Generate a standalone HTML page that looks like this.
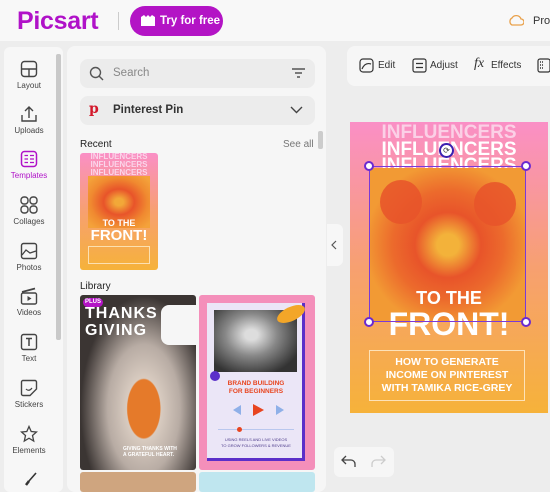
<!DOCTYPE html>
<html><head><style>
*{margin:0;padding:0;box-sizing:border-box}
body{width:550px;height:490px;overflow:hidden;background:#ededed;font-family:"Liberation Sans",sans-serif;position:relative}
.abs{position:absolute}
.top{left:0;top:0;width:550px;height:41px;background:#f8f8f8}
.logo{left:17px;top:7px;font-size:25px;color:#b012c8;font-weight:bold;letter-spacing:-0.3px}
.btn{left:130px;top:6px;width:93px;height:30px;border-radius:15px;background:#b314c5;color:#fff;font-size:11.5px;font-weight:bold;line-height:30px;padding-left:30px;white-space:nowrap}
.side{left:4px;top:47px;width:59px;height:445px;background:#f7f7f7;border-radius:6px}
.sb{left:56px;top:54px;width:5px;height:286px;background:#c9c9c9;border-radius:2px}
.it{left:4px;width:50px;text-align:center;font-size:8px;color:#444}
.it svg{display:block;margin:0 auto 3px}
.panel{left:67px;top:46px;width:259px;height:446px;background:#f6f6f6;border-radius:8px}
.field{left:80px;width:235px;height:29px;background:#ececec;border-radius:8px;font-size:11.5px}
.tb{left:347px;top:46px;width:210px;height:40px;background:#f6f6f6;border-radius:8px;font-size:10px;color:#333}
.poster{background:linear-gradient(#fa8fc6 0%,#f7a070 50%,#f6b23a 100%);overflow:hidden}
.w{color:#fff;font-weight:bold;text-align:center;white-space:nowrap}
</style></head><body>
<div class="abs top"></div>
<div class="abs logo">Picsart</div>
<div class="abs" style="left:118px;top:12px;width:1px;height:18px;background:#ccc"></div>
<div class="abs btn"><svg class="abs" style="left:11px;top:9px" width="14" height="11"><path d="M0 2 L3 0 L5 2 L7 0 L9 2 L11 0 L14 2 V11 H0Z" fill="#fff"/></svg>Try for free</div>
<svg class="abs" style="left:508px;top:14px" width="16" height="12"><path d="M4 11 A4 4 0 0 1 4 4 A5 5 0 0 1 13 5 A3 3 0 0 1 13 11Z" fill="none" stroke="#e9a14b" stroke-width="1.3"/></svg>
<div class="abs" style="left:533px;top:15px;font-size:11px;color:#333">Pro</div>

<div class="abs side"></div>
<div class="abs sb"></div>
<div class="abs it" style="top:60px"><svg width="18" height="18"><rect x="1.5" y="1.5" width="15" height="15" rx="3" fill="none" stroke="#444" stroke-width="1.4"/><path d="M1.5 9H16.5M9 9V16.5" stroke="#444" stroke-width="1.4"/></svg>Layout</div>
<div class="abs it" style="top:105px"><svg width="18" height="18"><path d="M2 10V16H16V10M9 13V2M5 6L9 2L13 6" fill="none" stroke="#444" stroke-width="1.4"/></svg>Uploads</div>
<div class="abs it" style="top:150px;color:#b012c8"><svg width="18" height="18"><rect x="1.5" y="1.5" width="15" height="15" rx="3" fill="none" stroke="#b012c8" stroke-width="1.5"/><path d="M4.5 5.5H8M4.5 9H8M4.5 12.5H8M10 5.5H14M10 9H14M10 12.5H14" stroke="#b012c8" stroke-width="1.3"/></svg>Templates</div>
<div class="abs it" style="top:196px"><svg width="18" height="18"><rect x="1" y="1" width="7" height="7" rx="3" fill="none" stroke="#444" stroke-width="1.4"/><rect x="10" y="1" width="7" height="7" rx="3" fill="none" stroke="#444" stroke-width="1.4"/><rect x="1" y="10" width="7" height="7" rx="3" fill="none" stroke="#444" stroke-width="1.4"/><rect x="10" y="10" width="7" height="7" rx="3" fill="none" stroke="#444" stroke-width="1.4"/></svg>Collages</div>
<div class="abs it" style="top:242px"><svg width="18" height="18"><rect x="1.5" y="1.5" width="15" height="15" rx="2" fill="none" stroke="#444" stroke-width="1.4"/><path d="M2 13L6 8L10 11L16 9" fill="none" stroke="#444" stroke-width="1.3"/></svg>Photos</div>
<div class="abs it" style="top:287px"><svg width="18" height="18"><rect x="1.5" y="6" width="15" height="11" rx="1.5" fill="none" stroke="#444" stroke-width="1.4"/><path d="M2 5L15 1.5" stroke="#444" stroke-width="1.8"/><path d="M7.5 9V14L11.5 11.5Z" fill="#444"/></svg>Videos</div>
<div class="abs it" style="top:333px"><svg width="18" height="18"><rect x="1.5" y="1.5" width="15" height="15" rx="2" fill="none" stroke="#444" stroke-width="1.4"/><path d="M6 5.5H12M9 5.5V13" stroke="#444" stroke-width="1.5"/></svg>Text</div>
<div class="abs it" style="top:379px"><svg width="18" height="18"><path d="M3 1.5H15A1.5 1.5 0 0 1 16.5 3V10L10 16.5H3A1.5 1.5 0 0 1 1.5 15V3A1.5 1.5 0 0 1 3 1.5Z" fill="none" stroke="#444" stroke-width="1.4"/><path d="M6 10Q9 13 12 9" fill="none" stroke="#444" stroke-width="1.2"/></svg>Stickers</div>
<div class="abs it" style="top:425px"><svg width="18" height="18"><path d="M9 1.5L11.2 6.5L16.5 7L12.5 10.5L13.7 16L9 13.2L4.3 16L5.5 10.5L1.5 7L6.8 6.5Z" fill="none" stroke="#444" stroke-width="1.3"/></svg>Elements</div>
<svg class="abs" style="left:24px;top:472px" width="14" height="14"><path d="M12 1L5 9" stroke="#333" stroke-width="1.6"/><path d="M5 9L2 13" stroke="#333" stroke-width="2.5"/></svg>

<div class="abs panel"></div>
<div class="abs field" style="top:59px"><svg class="abs" style="left:9px;top:7px" width="15" height="15"><circle cx="6.5" cy="6.5" r="5" fill="none" stroke="#555" stroke-width="1.4"/><path d="M10 10L14 14" stroke="#555" stroke-width="1.4"/></svg><span class="abs" style="left:33px;top:8px;color:#888">Search</span><svg class="abs" style="left:212px;top:9px" width="13" height="11"><path d="M0 1H13M3 5H10M5 9H8" stroke="#555" stroke-width="1.4"/></svg></div>
<div class="abs field" style="top:96px"><span class="abs" style="left:9px;top:5px;color:#d3182b;font-weight:bold;font-size:14px;font-family:'DejaVu Serif',serif">p</span><span class="abs" style="left:33px;top:8px;color:#333;font-weight:bold">Pinterest Pin</span><svg class="abs" style="left:210px;top:10px" width="13" height="8"><path d="M1 1L6.5 6.5L12 1" fill="none" stroke="#444" stroke-width="1.4"/></svg></div>
<div class="abs" style="left:80px;top:139px;font-size:10px;color:#222">Recent</div>
<div class="abs" style="left:283px;top:139px;font-size:10px;color:#777">See all</div>
<div class="abs" style="left:318px;top:131px;width:5px;height:18px;background:#ccc;border-radius:2px"></div>

<div class="abs poster" style="left:80px;top:153px;width:78px;height:117px;border-radius:3px">
 <div class="abs w" style="left:0;width:78px;top:0;font-size:8px;color:#fbd5ea;line-height:8px">INFLUENCERS<br>INFLUENCERS<br>INFLUENCERS</div>
 <div class="abs" style="left:8px;top:23px;width:62px;height:52px;background:radial-gradient(ellipse at 50% 50%,#f2a838 0 10%,#e8542a 35%,#f08a30 65%,#f4a23a 90%)"></div>
 <div class="abs w" style="left:0;width:78px;top:65px;font-size:9px">TO THE</div>
 <div class="abs w" style="left:0;width:78px;top:74px;font-size:15px">FRONT!</div>
 <div class="abs" style="left:8px;top:93px;width:62px;height:18px;border:1px solid #fce0b0"></div>
</div>

<div class="abs" style="left:80px;top:281px;font-size:10px;color:#222">Library</div>
<div class="abs" style="left:80px;top:295px;width:116px;height:175px;border-radius:3px;background:radial-gradient(ellipse at 55% 65%,#e57a2a 0 18%,#d8cbc0 19%,#b8aca4 40%,#3b3533 70%)"></div>
<div class="abs" style="left:161px;top:305px;width:36px;height:40px;background:#f6f6f6;border-radius:8px 0 0 8px"></div>
<div class="abs" style="left:83px;top:298px;width:20px;height:9px;background:#b314c5;border-radius:5px;color:#fff;font-size:6px;font-weight:bold;line-height:9px;text-align:center">PLUS</div>
<div class="abs w" style="left:85px;top:305px;font-size:16px;line-height:17px;text-align:left;letter-spacing:1px">THANKS<br>GIVING</div>
<div class="abs w" style="left:123px;top:446px;font-size:5px;line-height:6px;text-align:left">GIVING THANKS WITH<br>A GRATEFUL HEART.</div>
<div class="abs" style="left:199px;top:295px;width:116px;height:175px;background:#f48fba;border-radius:3px"></div>
<div class="abs" style="left:207px;top:303px;width:98px;height:158px;background:#ebe6f7;border-right:3px solid #5b2fc9;border-bottom:3px solid #5b2fc9"></div>
<div class="abs" style="left:214px;top:310px;width:83px;height:62px;background:radial-gradient(ellipse at 45% 40%,#ddd 10%,#888 40%,#333 80%)"></div>
<div class="abs" style="left:276px;top:307px;width:30px;height:14px;background:#f3a628;border-radius:50%;transform:rotate(-25deg)"></div>
<div class="abs" style="left:210px;top:371px;width:10px;height:10px;background:#5b2fc9;border-radius:50%"></div>
<div class="abs" style="left:207px;top:380px;width:98px;text-align:center;color:#e8451f;font-size:6.5px;font-weight:bold;line-height:8px">BRAND BUILDING<br>FOR BEGINNERS</div>
<svg class="abs" style="left:228px;top:403px" width="60" height="14"><path d="M3 2V12M13 2L5 7L13 12Z" fill="#8fb0e8"/><path d="M25 1V13L36 7Z" fill="#e8451f"/><path d="M48 2L56 7L48 12ZM57 2V12" fill="#8fb0e8"/></svg>
<div class="abs" style="left:218px;top:429px;width:76px;height:1px;background:#b9c7ee"></div>
<div class="abs" style="left:237px;top:427px;width:5px;height:5px;background:#e8451f;border-radius:50%"></div>
<div class="abs" style="left:207px;top:437px;width:98px;text-align:center;color:#4b3a8a;font-size:4px;line-height:6px">USING REELS AND LIVE VIDEOS<br>TO GROW FOLLOWERS &amp; REVENUE</div>
<div class="abs" style="left:80px;top:472px;width:116px;height:20px;background:#cfa57f;border-radius:3px"></div>
<div class="abs" style="left:199px;top:472px;width:116px;height:20px;background:#bfe6ef;border-radius:3px"></div>

<div class="abs" style="left:327px;top:224px;width:16px;height:42px;background:#f7f7f7;border-radius:0 6px 6px 0"></div>
<svg class="abs" style="left:331px;top:240px" width="6" height="10"><path d="M5 1L1 5L5 9" fill="none" stroke="#555" stroke-width="1.2"/></svg>

<div class="abs tb"></div>
<svg class="abs" style="left:359px;top:58px" width="15" height="15"><rect x="1" y="1" width="13" height="13" rx="3" fill="none" stroke="#333" stroke-width="1.2"/><path d="M3 11Q6 4 12 6" fill="none" stroke="#333" stroke-width="1.2"/></svg>
<div class="abs" style="left:378px;top:60px;font-size:10px;color:#333">Edit</div>
<svg class="abs" style="left:412px;top:58px" width="15" height="15"><rect x="1" y="1" width="13" height="13" rx="2" fill="none" stroke="#333" stroke-width="1.2"/><path d="M4 5.5H11M4 9.5H11" stroke="#333" stroke-width="1.2"/></svg>
<div class="abs" style="left:430px;top:60px;font-size:10px;color:#333">Adjust</div>
<div class="abs" style="left:474px;top:56px;font-size:14px;font-style:italic;color:#333;font-family:'Liberation Serif',serif">fx</div>
<div class="abs" style="left:491px;top:60px;font-size:10px;color:#333">Effects</div>
<svg class="abs" style="left:537px;top:58px" width="13" height="15"><rect x="1" y="1" width="12" height="13" rx="2" fill="none" stroke="#333" stroke-width="1.2"/><path d="M3 4H6M3 7H6M3 10H6" stroke="#333" stroke-width="1.5" stroke-dasharray="1 1"/></svg>

<div class="abs poster" style="left:350px;top:122px;width:198px;height:291px">
 <div class="abs" style="left:20px;top:46px;width:156px;height:154px;background:radial-gradient(ellipse at 50% 50%,#f3b23a 0 10%,#e8542a 30%,#ec6a2c 50%,#f29a34 75%)"></div>
 <div class="abs" style="left:30px;top:58px;width:42px;height:44px;border-radius:50%;background:#e8542a;opacity:.85"></div>
 <div class="abs" style="left:124px;top:60px;width:42px;height:44px;border-radius:50%;background:#e8542a;opacity:.85"></div>
 <div class="abs w" style="left:0;width:198px;top:2px;font-size:19px;line-height:17px;color:#fbd0e6">INFLUENCERS</div>
 <div class="abs w" style="left:0;width:198px;top:19px;font-size:19px;line-height:17px">INFLUENCERS</div>
 <div class="abs w" style="left:0;width:198px;top:35px;font-size:19px;line-height:17px;height:11px;overflow:hidden">INFLUENCERS</div>
 <div class="abs w" style="left:0;width:198px;top:166px;font-size:18px">TO THE</div>
 <div class="abs w" style="left:0;width:198px;top:184px;font-size:32px;line-height:36px">FRONT!</div>
 <div class="abs w" style="left:19px;top:228px;width:156px;height:51px;border:1px solid #fde2b8;font-size:10.5px;line-height:13px;padding-top:5px">HOW TO GENERATE<br>INCOME ON PINTEREST<br>WITH TAMIKA RICE-GREY</div>
</div>
<div class="abs" style="left:369px;top:166px;width:157px;height:156px;border:1.5px solid #7a3ad8"></div>
<div class="abs" style="left:364px;top:161px;width:10px;height:10px;border-radius:50%;background:#fff;border:2px solid #6a2ad0"></div>
<div class="abs" style="left:521px;top:161px;width:10px;height:10px;border-radius:50%;background:#fff;border:2px solid #6a2ad0"></div>
<div class="abs" style="left:364px;top:317px;width:10px;height:10px;border-radius:50%;background:#fff;border:2px solid #6a2ad0"></div>
<div class="abs" style="left:521px;top:317px;width:10px;height:10px;border-radius:50%;background:#fff;border:2px solid #6a2ad0"></div>
<div class="abs" style="left:439px;top:143px;width:15px;height:15px;border-radius:50%;background:#fff;border:2px solid #3a1fb0;font-size:8px;text-align:center;line-height:11px;color:#333">⟳</div>

<div class="abs" style="left:334px;top:447px;width:60px;height:30px;background:#f6f6f6;border-radius:6px"></div>
<svg class="abs" style="left:341px;top:455px" width="16" height="13"><path d="M5 1L1 5L5 9M1 5H10A4 4 0 0 1 14 9V12" fill="none" stroke="#444" stroke-width="1.3"/></svg>
<svg class="abs" style="left:370px;top:455px" width="16" height="13"><path d="M11 1L15 5L11 9M15 5H6A4 4 0 0 0 2 9V12" fill="none" stroke="#ccc" stroke-width="1.3"/></svg>
</body></html>
